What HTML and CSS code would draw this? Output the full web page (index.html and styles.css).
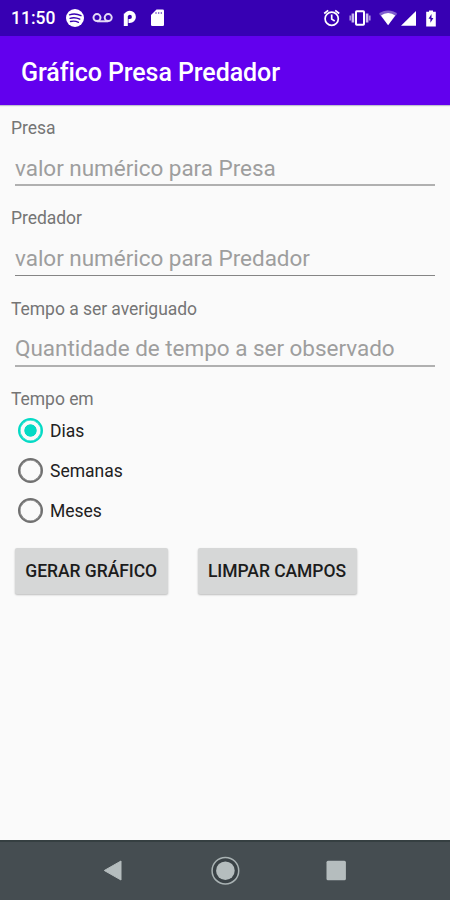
FILE: index.html
```
<!DOCTYPE html>
<html lang="pt-BR">
<head>
    <meta charset="UTF-8">
    <meta name="viewport" content="width=device-width, initial-scale=1.0">
    <title>Gráfico Presa Predador</title>
    <link rel="stylesheet" href="styles.css">
</head>
<body>
    <div class="status-bar">
        <span class="clock">11:50</span>
        <svg class="status-left" width="102" height="36" viewBox="64 0 102 36">
            <circle cx="75" cy="18" r="9" fill="#fff"/>
            <path d="M69.500 14.800c4-1.300 8-.9 11.500.9M70 18.300c3.500-1 6.800-.6 9.800.9M70.500 21.500c3-.8 5.600-.4 8 .8" fill="none" stroke="#3700b3" stroke-width="1.300" stroke-linecap="round"/>
            <g fill="none" stroke="#e4daf6" stroke-width="2">
                <circle cx="97" cy="17.600" r="3.500"/>
                <circle cx="108.200" cy="17.600" r="3.500"/>
                <path d="M97 21.300h11.200"/>
            </g>
            <path d="M125.800 26V13.500M125.800 15.500q1.500-2.700 4-2.700a4 4 0 0 1 0 8.200h-1.300" fill="none" stroke="#fff" stroke-width="4"/>
            <path d="M156.500 9.500h6.200q1.300 0 1.300 1.300v13.900q0 1.300-1.300 1.300h-10.400q-1.300 0-1.300-1.300v-9.700z" fill="#fff"/>
            <path d="M156 14v-2M158.700 14v-2M161.300 14v-2" stroke="#8567cf" stroke-width="1.200"/>
        </svg>
        <svg class="status-right" width="120" height="36" viewBox="320 0 120 36">
            <g fill="none" stroke="#fff" stroke-width="1.700">
                <circle cx="331.700" cy="18.800" r="6.600"/>
                <path d="M331.700 14.500v4.600l3 1.900M324.200 13.500l4-3.200M339.200 13.500l-4-3.200"/>
            </g>
            <rect x="356" y="11.200" width="8" height="13.600" rx=".8" fill="none" stroke="#fff" stroke-width="2"/>
            <path d="M352.900 13.500v9M367.100 13.500v9" stroke="#c9b9ee" stroke-width="2.600"/>
            <path d="M350.300 15.500v5M369.700 15.500v5" stroke="#a68ce0" stroke-width="1.800"/>
            <path d="M379 13.700a14.500 14.500 0 0 1 18.200 0L388.100 25z" fill="#7f5dce"/>
            <path d="M381 15.500a11 11 0 0 1 14.200 0L388.100 25.200z" fill="#fff"/>
            <path d="M416 11v14.700h-15z" fill="#fff"/>
            <path d="M429 10.500h4v1.200h2.800V26.500h-9.600V11.700h2.800z" fill="#fff"/>
            <path d="M431.500 14l-3 4.800h1.900v4l3-4.800h-1.900z" fill="#3700b3"/>
        </svg>
    </div>
    <header class="app-bar">
        <h1>Gráfico Presa Predador</h1>
    </header>
    <main>
        <form>
            <div class="field">
                <label for="presa">Presa</label>
                <input type="text" id="presa" placeholder="valor numérico para Presa">
            </div>
            <div class="field thin">
                <label for="predador">Predador</label>
                <input type="text" id="predador" placeholder="valor numérico para Predador">
            </div>
            <div class="field">
                <label for="tempo">Tempo a ser averiguado</label>
                <input type="text" id="tempo" placeholder="Quantidade de tempo a ser observado">
            </div>
            <p class="group-label">Tempo em</p>
            <label class="option"><input type="radio" name="unidade" checked><span>Dias</span></label>
            <label class="option"><input type="radio" name="unidade"><span>Semanas</span></label>
            <label class="option"><input type="radio" name="unidade"><span>Meses</span></label>
            <div class="buttons">
                <button type="button" class="generate">GERAR GRÁFICO</button>
                <button type="button" class="clear">LIMPAR CAMPOS</button>
            </div>
        </form>
    </main>
    <nav class="nav-bar">
        <svg width="28" height="28" viewBox="0 0 28 28"><path d="M4.300 13.500L21 4v19z" fill="#b5bdbe" stroke="#b5bdbe" stroke-linejoin="round"/></svg>
        <svg width="30" height="30" viewBox="0 0 30 30"><circle cx="15.400" cy="14.700" r="13.300" fill="#3a4246" stroke="#a9b2b3" stroke-width="1.500"/><circle cx="15.400" cy="14.700" r="9.300" fill="#b5bdbe"/></svg>
        <svg width="28" height="28" viewBox="0 0 28 28"><rect x="4.500" y="3.800" width="19.400" height="19.400" rx="1.500" fill="#b5bdbe"/></svg>
    </nav>
</body>
</html>
```
FILE: styles.css
```
* {
    box-sizing: border-box;
}
body {
    font-family: Roboto, "Liberation Sans", sans-serif;
    background-color: #fafafa;
    margin: 0;
    height: 100vh;
    display: flex;
    flex-direction: column;
    overflow: hidden;
}
.status-bar {
    display: flex;
    align-items: center;
    height: 36px;
    padding: 0 10px 0 11px;
    background-color: #3700b3;
    color: #fff;
}
.clock {
    width: 53px;
    font-size: 17.500px;
    font-weight: 500;
}
.status-right {
    margin-left: auto;
}
.app-bar {
    display: flex;
    align-items: center;
    height: 69px;
    padding: 3px 20px 0 21px;
    background-color: #6200ee;
    color: #fff;
    box-shadow: 0 1px 1px rgba(60, 60, 110, 0.3);
}
h1 {
    margin: 0;
    font-size: 25px;
    font-weight: 500;
    letter-spacing: -0.080px;
}
main {
    flex: 1;
    padding: 13px 11px 0;
}
.field {
    height: 90.400px;
}
.field label,
.group-label {
    display: block;
    margin: 0;
    font-size: 17.500px;
    line-height: 21px;
    letter-spacing: -0.040px;
    color: #757575;
}
.field input {
    display: block;
    width: 420px;
    height: 36px;
    margin: 11px 0 0 4px;
    padding: 1px 0 0;
    border: none;
    border-bottom: 2px solid #b0b0b0;
    border-radius: 0;
    background: none;
    font-family: inherit;
    font-size: 22.500px;
    letter-spacing: -0.030px;
    outline: none;
}
.field.thin input {
    border-bottom: 1px solid #858585;
}
.field input::placeholder {
    color: #9e9e9e;
}
.option {
    display: flex;
    align-items: center;
    height: 40px;
    padding-left: 7px;
    font-size: 17.500px;
    color: #212121;
}
.group-label + .option {
    margin-top: 1px;
}
.option input {
    appearance: none;
    width: 25px;
    height: 25px;
    margin: 0 7px 1px 0;
    border: 2px solid #707070;
    box-shadow: inset 0 0 0 0.500px #707070;
    border-radius: 50%;
}
.option input:checked {
    border-color: #03dac5;
    box-shadow: inset 0 0 0 0.500px #03dac5;
    background: radial-gradient(circle, #03dac5 5.800px, transparent 6.500px);
}
.buttons {
    display: flex;
    gap: 30px;
    padding: 17px 0 0 4px;
}
button {
    height: 46px;
    padding: 0;
    border: none;
    border-radius: 2px;
    background-color: #d6d7d7;
    box-shadow: 0 1px 2px rgba(0, 0, 0, 0.25);
    color: #1c1c1c;
    font-family: inherit;
    font-size: 17.500px;
    font-weight: 500;
    letter-spacing: -0.050px;
}
.generate {
    width: 152.500px;
}
.clear {
    width: 159px;
}
.nav-bar {
    display: flex;
    justify-content: space-between;
    align-items: center;
    height: 60px;
    padding: 0 100px;
    border-top: 2px solid #353f41;
    background-color: #454d51;
}
```
